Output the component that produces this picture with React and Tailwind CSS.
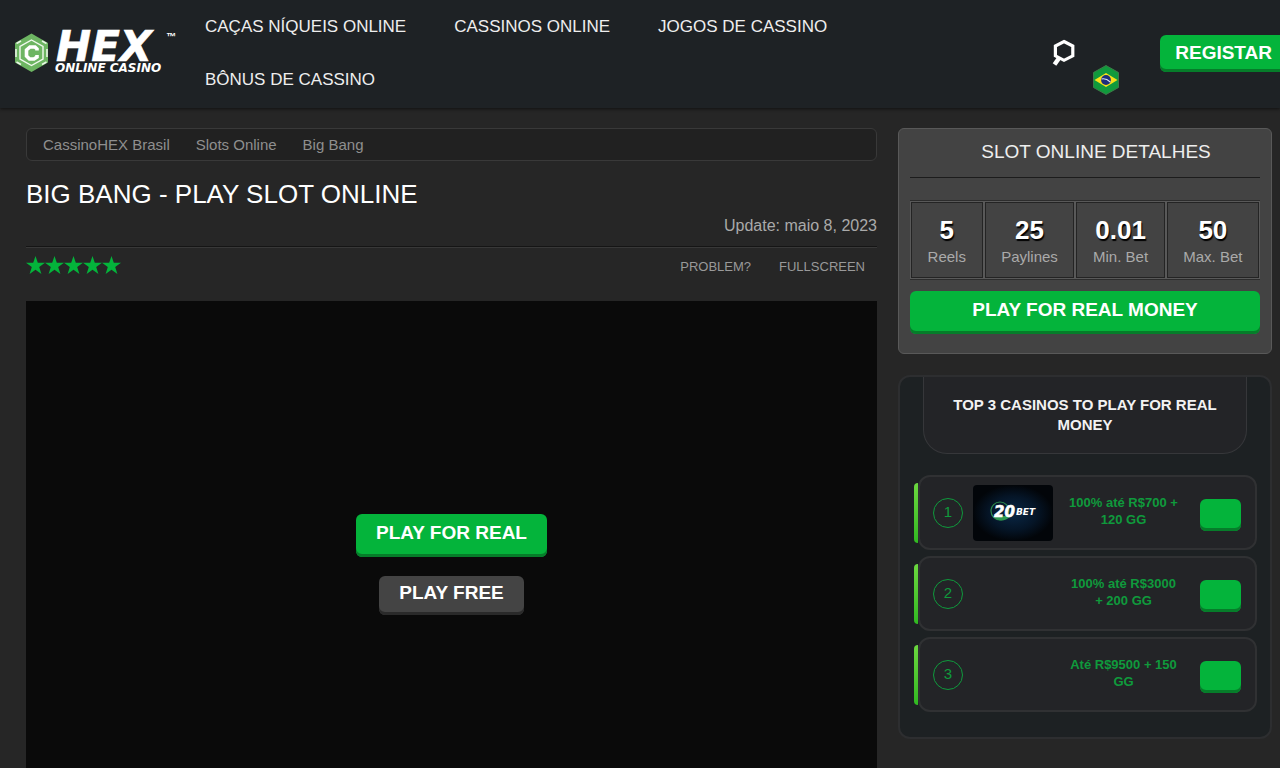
import React from 'react';
import clsx from 'clsx';

const NAV = ['Caças níqueis online', 'Cassinos online', 'Jogos de cassino', 'Bônus de cassino'];

const CRUMBS = ['CassinoHEX Brasil', 'Slots Online', 'Big Bang'];

const DETAILS = [
  { label: 'Reels', value: '5' },
  { label: 'Paylines', value: '25' },
  { label: 'Min. Bet', value: '0.01' },
  { label: 'Max. Bet', value: '50' },
];

const CASINOS = [
  { id: 1, bonus: '100% até R$700 + 120 GG', logo: true },
  { id: 2, bonus: '100% até R$3000 + 200 GG' },
  { id: 3, bonus: 'Até R$9500 + 150 GG' },
];

function Logo() {
  return (
    <a href="#" aria-label="Hex Online Casino" className="block shrink-0">
      <svg width="164" height="48" viewBox="0 0 164 48" className="overflow-visible">
        <path d="M19.5 4.5 36 14V33.5L19.5 43 3 33.5V14Z" fill="#6db562" />
        <path
          d="M4 20V28M35 20V28M4.5 14.5 9 12M34.5 14.5 30 12M4.5 33 9 35.5M34.5 33 30 35.5"
          fill="none"
          stroke="#e9f5e6"
          strokeWidth="1.6"
        />
        <path d="M19.5 11 31 17.5V30L19.5 36.5 8 30V17.5Z" fill="none" stroke="#f2faf0" strokeWidth="1.4" />
        <path d="M25 21.5V20L23 18H18L14.5 21V27L17.5 30H22L25 28V26" fill="none" stroke="#fff" strokeWidth="3.6" />
        <text
          x="44"
          y="32"
          fill="#fff"
          stroke="#fff"
          strokeWidth="0.6"
          fontFamily="DejaVu Sans"
          fontSize="42"
          fontWeight="700"
          fontStyle="italic"
        >
          HEX
        </text>
        <text x="43" y="43" fill="#fff" fontFamily="DejaVu Sans" fontSize="12" fontWeight="700" fontStyle="italic">
          ONLINE CASINO
        </text>
        <text x="154" y="11" fill="#fff" fontFamily="Liberation Sans" fontSize="10" fontWeight="700">
          ™
        </text>
      </svg>
    </a>
  );
}

function SearchIcon() {
  return (
    <svg width="24" height="28" viewBox="0 0 24 28" fill="none" stroke="#fff">
      <path d="M12 2.5 20.8 7V16.8L12 21.3 3.4 16.8V7Z" strokeWidth="3.2" />
      <path d="M7.5 18.5 2.5 25.5" strokeWidth="4.4" />
    </svg>
  );
}

function BrazilFlag() {
  return (
    <svg width="28" height="30" viewBox="0 0 28 30">
      <path d="M14 .5 26.5 7.5V22.5L14 29.5 1.5 22.5V7.5Z" fill="#109a3c" stroke="#3d7a48" />
      <path d="M14 8 25.5 15 14 22 2.5 15Z" fill="#f7e11a" />
      <circle cx="14" cy="15" r="4.9" fill="#1d2f7c" />
      <path d="M9.6 14Q14 13 18.3 17" fill="none" stroke="#dfe6f5" strokeWidth="1.1" />
    </svg>
  );
}

function Star() {
  return (
    <svg width="19" height="18" viewBox="0 0 19 18" fill="#04b43b">
      <path d="M9.5 0 11.8 6.8H19L13.2 11 15.4 18 9.5 13.7 3.6 18 5.8 11 0 6.8H7.2Z" />
    </svg>
  );
}

function TwentyBetLogo() {
  return (
    <svg width="80" height="56" viewBox="0 0 80 56" className="rounded">
      <defs>
        <radialGradient id="bet-bg">
          <stop offset="0" stopColor="#0a2745" />
          <stop offset=".6" stopColor="#051527" />
          <stop offset="1" stopColor="#020509" />
        </radialGradient>
      </defs>
      <rect width="80" height="56" fill="url(#bet-bg)" />
      <circle cx="27" cy="26" r="9" fill="none" stroke="#2b8a4c" strokeWidth="1.2" />
      <path d="M20 31Q28 40 38 31Z" fill="#2f9a52" />
      <text
        x="21"
        y="32"
        fill="#fff"
        stroke="#fff"
        strokeWidth="0.6"
        fontFamily="DejaVu Sans"
        fontSize="15"
        fontWeight="700"
        fontStyle="italic"
      >
        20
      </text>
      <text x="43" y="30" fill="#fff" fontFamily="DejaVu Sans" fontSize="9" fontWeight="700" fontStyle="italic">
        BET
      </text>
    </svg>
  );
}

function Button({ className, children, ...props }) {
  return (
    <button
      type="button"
      className={clsx('cursor-pointer font-bold uppercase text-white text-[19px] leading-5 rounded-md', className)}
      {...props}
    >
      {children}
    </button>
  );
}

function Header() {
  return (
    <header className="flex items-center bg-[#1e2225] pb-[2px] pl-3 shadow-[0_1px_3px_#111]">
      <Logo />
      <nav className="flex flex-1 flex-wrap gap-x-12 pl-[29px]">
        {NAV.map((item) => (
          <a key={item} href="#" className="py-[14px] text-[17px] leading-[25px] uppercase text-[#eee]">
            {item}
          </a>
        ))}
      </nav>
      <div className="flex shrink-0 items-center pl-3">
        <button type="button" aria-label="Search" className="cursor-pointer">
          <SearchIcon />
        </button>
        <button type="button" aria-label="Brasil" className="mt-[53px] ml-4 cursor-pointer">
          <BrazilFlag />
        </button>
        <Button className="ml-10 rounded-r-none bg-[#04b43b] pt-2 pr-2 pb-[9px] pl-[15px] shadow-[inset_0_-3px_0_#067d2a]">
          Registar
        </Button>
      </div>
    </header>
  );
}

function SlotPlayer() {
  return (
    <div className="flex min-w-0 flex-1 flex-col">
      <nav className="flex gap-[26px] rounded-md border border-[#393939] bg-[#212121] px-4 py-[5px] text-[15px] leading-[21px] text-[#8f8f8f]">
        {CRUMBS.map((crumb) => (
          <a key={crumb} href="#">
            {crumb}
          </a>
        ))}
      </nav>
      <h1 className="mt-4 text-[26px] leading-[34px] uppercase text-white">Big Bang - Play Slot Online</h1>
      <p className="border-b border-[#151515] pt-[3px] pb-2 text-right text-base leading-6 text-[#aaa]">
        Update: maio 8, 2023
      </p>
      <div className="flex items-start justify-between border-t border-[#383838] pt-2 pb-[26px]">
        <div role="img" aria-label="5 out of 5" className="flex">
          {[1, 2, 3, 4, 5].map((n) => (
            <Star key={n} />
          ))}
        </div>
        <div className="flex gap-7 pt-[3px] pr-3 text-[13px] leading-4 text-[#999]">
          <button type="button" className="cursor-pointer uppercase">
            Problem?
          </button>
          <button type="button" className="cursor-pointer uppercase">
            Fullscreen
          </button>
        </div>
      </div>
      <div className="flex min-h-[526px] flex-col items-center justify-center gap-[19px] bg-[#0a0a0a]">
        <Button className="bg-[#04b43b] px-5 pt-[9px] pb-[14px] shadow-[inset_0_-3px_0_#067d2a]">Play for real</Button>
        <Button className="bg-[#444] px-5 pt-[7px] pb-3 shadow-[inset_0_-3px_0_#2a2a2a]">Play free</Button>
      </div>
    </div>
  );
}

function SlotDetails() {
  return (
    <section className="rounded-md border border-[#595959] bg-[#434343] px-[11px] pb-[19px]">
      <h2 className="border-b border-[#1c1c1c] pt-[10px] pb-3 pl-[22px] text-center text-[19px] leading-[26px] uppercase text-[#eee]">
        Slot online detalhes
      </h2>
      <dl className="mt-[22px] flex gap-[2px] border-y border-[#2c2c2c] bg-[#595959] p-px">
        {DETAILS.map(({ label, value }) => (
          <div
            key={label}
            className="flex flex-auto flex-col-reverse border border-[#242424] bg-[#434343] px-3 pt-3 pb-2 text-center"
          >
            <dt className="text-[15px] leading-6 text-[#aaa]">{label}</dt>
            <dd className="text-[26px] leading-[30px] font-bold text-white [text-shadow:1px_2px_1px_#000]">{value}</dd>
          </div>
        ))}
      </dl>
      <Button className="mt-[11px] w-full bg-[#04b43b] pt-[9px] pb-[14px] shadow-[inset_0_-3px_0_#067d2a]">
        Play for real money
      </Button>
    </section>
  );
}

function CasinoRow({ casino }) {
  return (
    <li className="flex items-center">
      <span className="h-[60px] w-1 shrink-0 rounded-l bg-linear-to-b from-[#6bd83f] to-[#2fb921]"></span>
      <div className="flex h-[75px] flex-1 items-center rounded-xl border-2 border-[#303133] bg-[#232427] pr-[14px] pl-[13px]">
        <span className="flex size-[30px] shrink-0 items-center justify-center rounded-full border border-[#0f9a3c] text-[15px] text-[#0f9a3c]">
          {casino.id}
        </span>
        <div className="ml-[10px] h-14 w-20 shrink-0">{casino.logo && <TwentyBetLogo />}</div>
        <p className="flex-1 pr-5 pb-[3px] pl-[14px] text-center text-[13px] leading-[17px] font-bold text-[#0f9a3c]">
          {casino.bonus}
        </p>
        <Button
          aria-label={`Play at casino ${casino.id}`}
          className="mt-1 h-8 w-[41px] shrink-0 bg-[#04b43b] shadow-[inset_0_-3px_0_#067d2a]"
        ></Button>
      </div>
    </li>
  );
}

function TopCasinos() {
  return (
    <section className="mt-[21px] rounded-xl border-2 border-[#2d2e30] bg-[#1d2123] pr-[13px] pb-[25px] pl-[14px]">
      <h2 className="mr-[10px] ml-[9px] rounded-b-3xl border border-t-0 border-[#36373a] bg-[#232427] px-5 pt-[18px] pb-[18px] text-center text-[15px] leading-5 font-bold uppercase text-[#f2f2f2]">
        Top 3 casinos to play for real money
      </h2>
      <ul className="mt-[21px] flex flex-col gap-[6px]">
        {CASINOS.map((casino) => (
          <CasinoRow key={casino.id} casino={casino} />
        ))}
      </ul>
    </section>
  );
}

export default function App() {
  return (
    <div className="h-screen overflow-hidden bg-[#262626] font-['Liberation_Sans',sans-serif]">
      <Header />
      <main className="flex items-start gap-[21px] pt-5 pr-2 pl-[26px]">
        <SlotPlayer />
        <aside className="w-[374px] shrink-0">
          <SlotDetails />
          <TopCasinos />
        </aside>
      </main>
    </div>
  );
}
